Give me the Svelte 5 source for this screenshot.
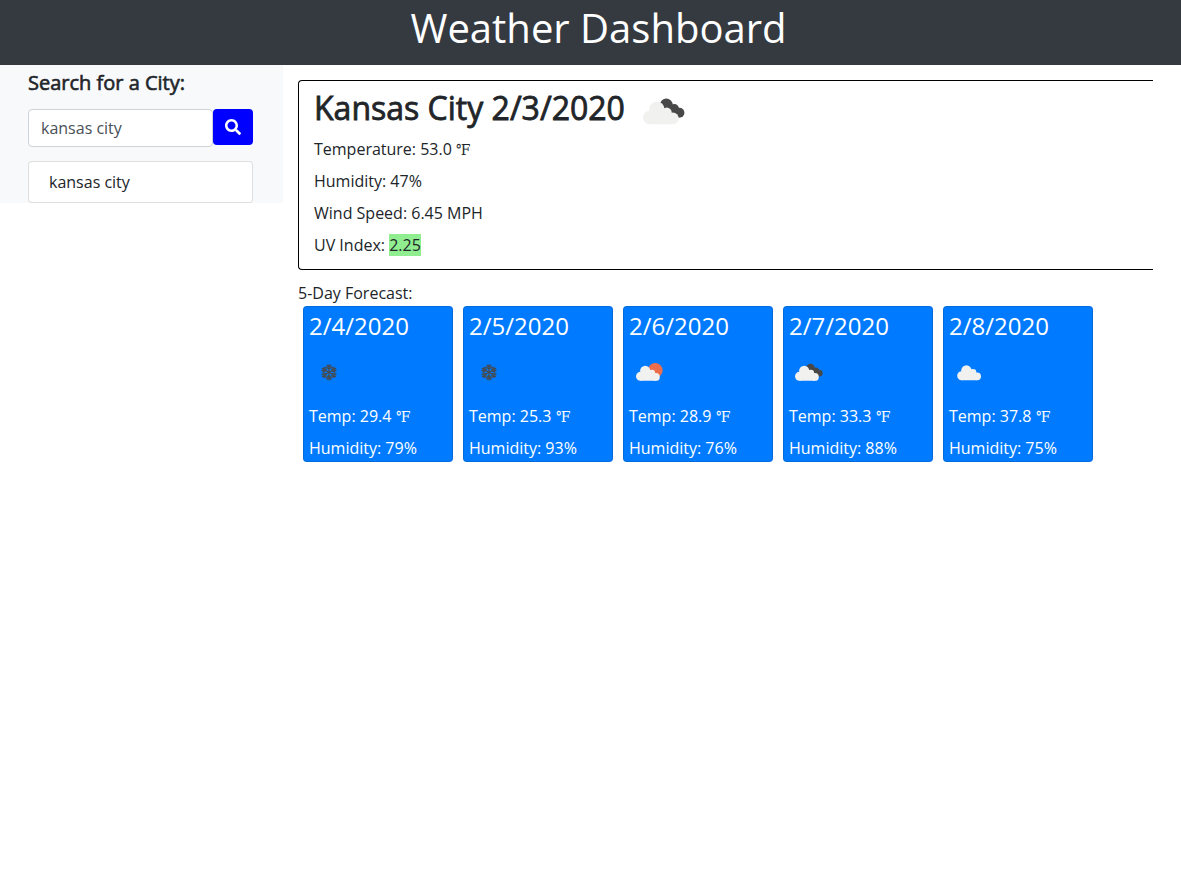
<script>
  const forecast = [
    { date: '2/4/2020', icon: 'snow', temp: '29.4', humidity: 79 },
    { date: '2/5/2020', icon: 'snow', temp: '25.3', humidity: 93 },
    { date: '2/6/2020', icon: 'sun', temp: '28.9', humidity: 76 },
    { date: '2/7/2020', icon: 'broken', temp: '33.3', humidity: 88 },
    { date: '2/8/2020', icon: 'cloud', temp: '37.8', humidity: 75 }
  ];
  const shifts = { broken: 'translate(0 0)', sun: 'translate(1.5 0)', cloud: 'translate(3.3 -0.9)' };
  let query = $state('kansas city');
</script>

{#snippet weather(kind)}
  <svg class="weather" viewBox="0 0 60 60" aria-hidden="true">
    {#if kind === 'snow'}
      <g fill="none" stroke="#484848" stroke-width="1.7">
        {#each [0, 60, 120, 180, 240, 300] as angle}
          <path transform="rotate({angle} 30 30.5)" d="M30 30.5V18.2M26.6 19.4L30 22.8L33.4 19.4M25.8 21.8L30 26L34.2 21.8" />
        {/each}
      </g>
    {:else}
      {#if kind === 'sun'}
        <circle cx="39.4" cy="27.6" r="11" fill="#ec6e4c" />
      {:else if kind === 'broken'}
        <g fill="#484848">
          <circle cx="32.3" cy="24" r="6.4" />
          <circle cx="40.3" cy="27.8" r="4.7" />
          <circle cx="45.4" cy="31.8" r="5" />
          <path d="M32 26L40 24L45 30L43 36.4L34 34z" />
        </g>
      {/if}
      <g transform={shifts[kind]} fill="#f1f1f0">
        <circle cx="15.7" cy="36.5" r="6.7" />
        <circle cx="22.8" cy="28.3" r="7.7" />
        <circle cx="32.6" cy="31.7" r="5.2" />
        <circle cx="38.9" cy="37.4" r="5.8" />
        <path d="M15.7 30H32L38.9 36V43.2H15.7z" />
      </g>
    {/if}
  </svg>
{/snippet}

<header><h1>Weather Dashboard</h1></header>
<main>
  <aside>
    <h2>Search for a City:</h2>
    <form onsubmit={(e) => e.preventDefault()}>
      <input bind:value={query} aria-label="City" />
      <button aria-label="Search">
        <svg viewBox="0 0 512 512"><path fill="currentColor" d="M505 442.7L405.3 343c-4.5-4.5-10.6-7-17-7H372c27.6-35.3 44-79.7 44-128C416 93.1 322.9 0 208 0S0 93.1 0 208s93.1 208 208 208c48.3 0 92.7-16.4 128-44v16.3c0 6.4 2.5 12.5 7 17l99.7 99.7c9.4 9.4 24.6 9.4 33.9 0l28.3-28.3c9.4-9.4 9.4-24.6.1-34zM208 336c-70.7 0-128-57.2-128-128 0-70.7 57.2-128 128-128 70.7 0 128 57.2 128 128 0 70.7-57.2 128-128 128z" /></svg>
      </button>
    </form>
    <ul><li>kansas city</li></ul>
  </aside>
  <div class="content">
    <section class="current">
      <div class="title"><h2>Kansas City 2/3/2020</h2>{@render weather('broken')}</div>
      <p>Temperature: 53.0 <span class="unit">℉</span></p>
      <p>Humidity: 47%</p>
      <p>Wind Speed: 6.45 MPH</p>
      <p>UV Index: <span class="uv">2.25</span></p>
    </section>
    <div class="label">5-Day Forecast:</div>
    <div class="cards">
      {#each forecast as day}
        <article>
          <h3>{day.date}</h3>
          {@render weather(day.icon)}
          <p>Temp: {day.temp} <span class="unit">℉</span></p>
          <p>Humidity: {day.humidity}%</p>
        </article>
      {/each}
    </div>
  </div>
</main>

<style>
  :global(body) {
    background: #fff;
    color: #212529;
    font: 400 16px/24px 'Open Sans', sans-serif;
  }
  * { box-sizing: border-box; }
  h1, h2, h3, p, ul { margin: 0; padding: 0; font-weight: 400; }
  header {
    height: 65px;
    padding: 4px 0 0 16px;
    background: #343a40;
    color: #fff;
    text-align: center;
  }
  h1 { font-size: 40px; line-height: 48px; }
  main { display: flex; align-items: flex-start; }
  aside {
    width: 283px;
    height: 138px;
    padding: 6px 30px 0 28px;
    background: #f8f9fa;
  }
  aside h2 {
    font-size: 20px;
    line-height: 24px;
    -webkit-text-stroke: 0.6px currentColor;
  }
  form { display: flex; align-items: flex-start; margin-top: 14px; }
  input {
    width: 185px;
    height: 38px;
    padding: 6px 12px;
    border: 1px solid #ced4da;
    border-radius: 4px;
    background: #fff;
    color: #495057;
    font: inherit;
  }
  button {
    display: flex;
    align-items: center;
    justify-content: center;
    width: 40px;
    height: 36px;
    padding: 0;
    border: 0;
    border-radius: 4px;
    background: #00f;
    color: #fff;
  }
  button svg { width: 16px; height: 16px; }
  ul { margin-top: 14px; list-style: none; }
  li {
    height: 42px;
    padding: 8px 20px;
    border: 1px solid rgba(0, 0, 0, 0.125);
    border-radius: 4px;
    background: #fff;
  }
  .content { width: 855px; margin: 15px 0 0 15px; }
  .current {
    height: 190px;
    padding: 0 15px;
    border: 1px solid #000;
    border-right: 0;
    border-radius: 4px 0 0 4px;
  }
  .title { display: flex; height: 56px; }
  .title h2 {
    margin-top: 8px;
    font-size: 32px;
    line-height: 38px;
    -webkit-text-stroke: 0.8px currentColor;
  }
  .weather { display: block; width: 40px; height: 40px; }
  .title .weather { width: 60px; height: 60px; margin-left: 9px; }
  .current p { height: 32px; }
  .unit {
    display: inline-block;
    font-family: 'DejaVu Serif', serif;
    font-size: 15px;
    line-height: 1;
    transform: scaleX(0.9);
    transform-origin: left;
  }
  .uv { background: lightgreen; }
  .label { margin-top: 11px; }
  .cards { display: flex; gap: 10px; margin: 1px 0 0 5px; }
  article {
    width: 150px;
    height: 156px;
    padding: 5px;
    border: 1px solid rgba(0, 0, 0, 0.125);
    border-radius: 4px;
    background: #007bff;
    color: #fff;
  }
  h3 { height: 40px; font-size: 24px; line-height: 27px; }
  article p { height: 32px; }
  article .weather + p { margin-top: 12px; }
</style>
